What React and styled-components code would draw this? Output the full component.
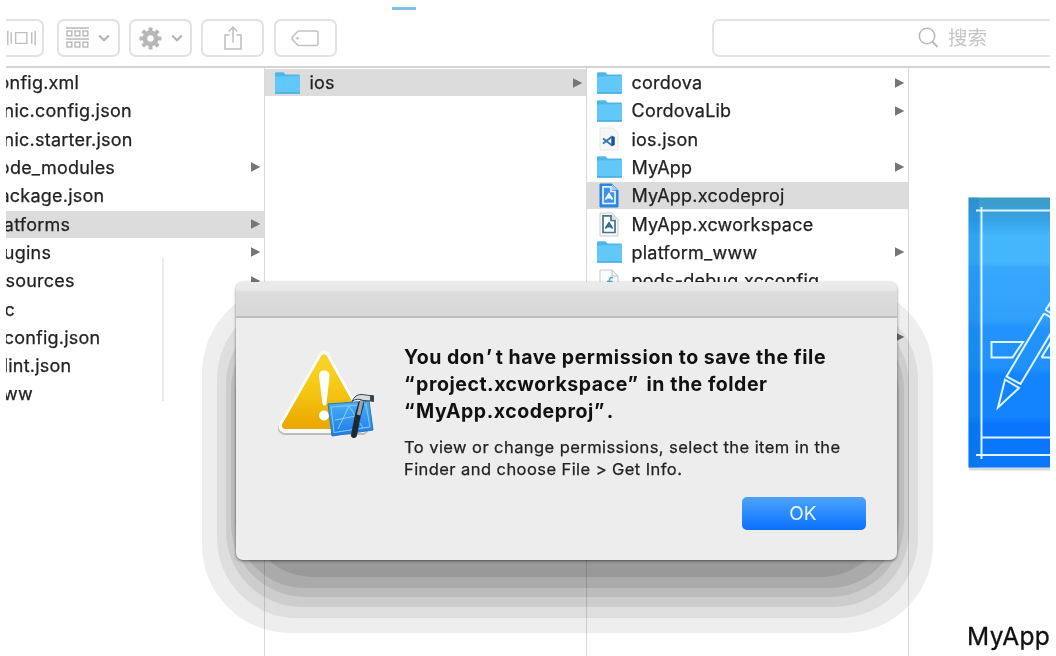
import React from 'react';
import styled, { createGlobalStyle } from 'styled-components';

const Global = createGlobalStyle`
  * { box-sizing: border-box; }
  body { margin: 0; background: #fff; font-family: Inter, "Noto Sans CJK SC", sans-serif; color: #222; }
`;

const Window = styled.div`
  position: relative;
  width: 1044px;
  height: 656px;
  margin-left: 6px;
  overflow: hidden;
  background: #fff;
`;

const Toolbar = styled.header`
  display: flex;
  align-items: flex-start;
  height: 68px;
  padding-top: 19px;
  border-bottom: 2px solid #d4d4d4;
`;

const ToolButton = styled.div`
  display: flex;
  align-items: center;
  justify-content: center;
  flex: none;
  width: ${(p) => p.$width || 63}px;
  height: 38px;
  margin-left: ${(p) => p.$gap ?? 9.3}px;
  border: 2px solid #e2e2e2;
  border-radius: 7px;
`;

const Gap = styled.span`
  width: 9px;
`;

const Search = styled.div`
  display: flex;
  align-items: center;
  flex: none;
  width: 400px;
  height: 38px;
  margin-left: 375.5px;
  padding-left: 204px;
  gap: 9px;
  border: 2px solid #e4e4e4;
  border-radius: 7px;
  color: #c6c6c6;
  font-size: 19.5px;
  line-height: 26px;
`;

const SearchLabel = styled.span`
  padding-bottom: 1px;
`;

const Columns = styled.div`
  display: flex;
  height: 588px;
`;

const Column = styled.div`
  flex: none;
  width: ${(p) => p.$width}px;
  padding-top: 1px;
  border-right: 1.5px solid #dadada;
  overflow: hidden;
`;

const Row = styled.div`
  display: flex;
  align-items: center;
  height: 27px;
  margin-bottom: 1.32px;
  padding-left: ${(p) => p.$indent}px;
  padding-right: 3px;
  background: ${(p) => (p.$selected ? '#dcdcdc' : 'transparent')};
`;

const IconSlot = styled.span`
  display: flex;
  justify-content: center;
  flex: none;
  width: 27px;
  margin-right: 9px;
`;

const Name = styled.span`
  flex: 1;
  margin-left: ${(p) => p.$shift || 0}px;
  white-space: nowrap;
  font-size: 18px;
  -webkit-text-stroke: 0.25px currentColor;
  line-height: 27px;
  letter-spacing: 0.23px;
`;

const Preview = styled.aside`
  display: flex;
  flex-direction: column;
  flex: none;
  padding: 129px 0 0 57px;
`;

const PreviewName = styled.div`
  margin: 145px 0 0 1px;
  font-size: 24.5px;
  -webkit-text-stroke: 0.3px currentColor;
  line-height: 32px;
  letter-spacing: 0.4px;
  color: #111;
`;

const TabMark = styled.div`
  position: absolute;
  left: 386px;
  top: 7px;
  width: 24px;
  height: 3px;
  background: #7fc0e6;
`;

const ScrollEdge = styled.div`
  position: absolute;
  left: 156px;
  top: 258px;
  width: 2px;
  height: 143px;
  background: #ececec;
`;

const Shadow = styled.div`
  position: absolute;
  inset: 0;
  mix-blend-mode: multiply;
  pointer-events: none;
`;

const ShadowBand = styled.div`
  position: absolute;
  left: ${(p) => p.$l}px;
  top: ${(p) => p.$t}px;
  width: ${(p) => p.$r - p.$l}px;
  height: ${(p) => p.$b - p.$t}px;
  border-radius: ${(p) => p.$radius}px;
  background: ${(p) => p.$color};
`;

const Dialog = styled.section`
  position: absolute;
  left: 230px;
  top: 282px;
  width: 661px;
  height: 277.5px;
  border-radius: 7px;
  overflow: hidden;
  background: #ededed;
  box-shadow: 0 1px 3px rgba(0, 0, 0, 0.5);
`;

const TitleBar = styled.div`
  height: 36px;
  background: linear-gradient(#ebebeb 0, #e8e8e8 8px, #dcdcdc 10px, #d8d8d8 100%);
  border-bottom: 2px solid #bdbdbd;
`;

const DialogBody = styled.div`
  display: flex;
  padding: 26px 31px 0 37px;
`;

const Message = styled.div`
  flex: 1;
  margin-left: 26px;
  white-space: nowrap;
`;

const Heading = styled.h1`
  margin: 0;
  font-size: 19.5px;
  line-height: 27px;
  font-weight: 700;
  letter-spacing: 0.54px;
  color: #111;
`;

const Mark = styled.span`
  margin: 0 ${(p) => p.$after || 0}px 0 ${(p) => p.$before || 0}px;
`;

const Detail = styled.p`
  margin: 11px 0 0;
  font-size: 16.5px;
  -webkit-text-stroke: 0.25px currentColor;
  line-height: 22px;
  letter-spacing: 0.43px;
  color: #222;
`;

const Actions = styled.div`
  display: flex;
  justify-content: flex-end;
  margin-top: 16.5px;
`;

const OkButton = styled.button`
  width: 124px;
  height: 33px;
  padding: 0 2px 0 0;
  border: 0;
  border-radius: 5px;
  background: linear-gradient(#4ea2fd, #2a8bff 50%, #0a70fc);
  color: #e8f4ff;
  font: 400 19px Inter, sans-serif;
`;

const Folder = () => (
  <svg width="27" height="24" viewBox="0 0 27 24">
    <path d="M1 2.5Q1 1.5 2 1.5H9.5L11.5 4H25Q26 4 26 5V22.5H1Z" fill="#62c8fa" />
    <path d="M1 5.500V2.500Q1 1.500 2 1.500H9.500L11.500 3.500H25.500V5Z" fill="#4fb4e6" />
    <path d="M1 22H26" stroke="#46a9dc" strokeWidth="1.4" />
  </svg>
);

const CodeFile = () => (
  <svg width="20" height="24" viewBox="0 0 20 24">
    <path d="M1 1H14L19 6V23H1Z" fill="#f6f6f6" stroke="#e8e8e8" />
    <path d="M4 11.500L12.500 18M4 16.500L12.500 10" stroke="#2d71b8" strokeWidth="1.7" fill="none" />
    <path d="M12.300 8.500L15.800 10V18L12.300 19.500Z" fill="#17549c" />
  </svg>
);

const ProjectFile = ({ filled }) => (
  <svg width="20" height="25" viewBox="0 0 20 25">
    <path d="M1 1H13L19 7V24H1Z" fill={filled ? '#2f86e4' : '#f7f8f9'} stroke={filled ? '#2f7ed6' : '#c9cdd0'} />
    <path d="M4 3.8H12V8.5H16V20.5H4Z" fill={filled ? '#3d92ea' : '#fff'} stroke={filled ? '#e7f4ff' : '#3f7397'} strokeWidth="1.7" />
    <path d="M13 1V7H19Z" fill={filled ? '#9fcdf9' : '#dce3e8'} />
    <path d="M6.500 16.500L10 11L13.500 16.500M7.500 14.500H12.500" stroke={filled ? '#fff' : '#2f6488'} strokeWidth="1.8" fill="none" />
  </svg>
);

const ConfigFile = () => (
  <svg width="20" height="24" viewBox="0 0 20 24">
    <path d="M1 1H13L19 7V23H1Z" fill="#fbfbfb" stroke="#c9c9c9" />
    <path d="M13 1V7H19" fill="none" stroke="#bdbdbd" />
    <path d="M14 9Q11 7.500 10.500 11L9.500 20M8 12.500H13.500" stroke="#4da9d8" strokeWidth="1.6" fill="none" />
  </svg>
);

const Arrow = () => (
  <svg width="11" height="12" viewBox="0 0 11 12">
    <path d="M1 1.300L10.300 6L1 10.700Z" fill="#757575" />
  </svg>
);

const Chevron = () => (
  <svg width="12" height="8" viewBox="0 0 12 8">
    <path d="M1.200 1.500L6 6.200L10.800 1.500" fill="none" stroke="#b3b3b3" strokeWidth="2.2" />
  </svg>
);

const FlowIcon = () => (
  <svg width="44" height="16" viewBox="1 0 44 16" fill="none" stroke="#c0c0c0" strokeWidth="1.5">
    <path d="M10 0.500V15.500M13.500 2V14M34.500 2V14M38 0.500V15.500" />
    <path d="M18 2.500H29.500V13.500H18Z" />
  </svg>
);

const GroupIcon = () => (
  <svg width="23" height="22" viewBox="0 0 23 22" fill="none" stroke="#b9b9b9" strokeWidth="1.4">
    <path d="M0 1H23M0 12H23" />
    {[1, 9, 17].map((x) => (
      <React.Fragment key={x}>
        <rect x={x} y="4" width="4.8" height="4.8" />
        <rect x={x} y="15.2" width="4.8" height="4.8" />
      </React.Fragment>
    ))}
  </svg>
);

const Gear = () => (
  <svg width="23" height="23" viewBox="-11.5 -11.5 23 23">
    {[0, 45, 90, 135].map((a) => (
      <rect key={a} x="-2" y="-11" width="4" height="22" rx="0.6" fill="#b7b7b7" transform={`rotate(${a})`} />
    ))}
    <circle r="5.6" fill="none" stroke="#b7b7b7" strokeWidth="4.6" />
    <circle r="3.2" fill="#fff" />
  </svg>
);

const Share = () => (
  <svg width="20" height="25" viewBox="0 0 20 25" fill="none" stroke="#bdbdbd" strokeWidth="1.5">
    <path d="M6.500 9H2V23H18V9H13.500M10 16.500V1.500M5.800 5.500L10 1.100L14.200 5.500" />
  </svg>
);

const Tag = () => (
  <svg width="28" height="17" viewBox="0 0 28 17">
    <path d="M8 1H25Q27 1 27 3V13.500Q27 15.500 25 15.500H8Q6.500 15.500 1.500 9.500Q0.600 8.200 1.500 7Q6.500 1 8 1Z" fill="none" stroke="#c2c2c2" strokeWidth="1.5" />
    <circle cx="6.500" cy="8.200" r="1.3" fill="#c2c2c2" />
  </svg>
);

const Magnifier = () => (
  <svg width="21" height="22" viewBox="0 0 21 22" fill="none" stroke="#bcbcbc" strokeWidth="1.6">
    <circle cx="9" cy="9" r="7.7" />
    <path d="M14.400 14.800L19.500 20" strokeWidth="2" />
  </svg>
);

const Blueprint = () => (
  <svg width="90" height="278" viewBox="2 0 90 278">
    <defs>
      <linearGradient id="sheet" x1="0" y1="0" x2="0" y2="1">
        <stop offset="0" stopColor="#3f9cc4" />
        <stop offset="0.08" stopColor="#37a2e6" />
        <stop offset="0.14" stopColor="#43b6fc" />
        <stop offset="0.24" stopColor="#43b6fc" />
        <stop offset="0.26" stopColor="#38a8fd" />
        <stop offset="0.45" stopColor="#30a0fc" />
        <stop offset="0.48" stopColor="#2394fd" />
        <stop offset="0.63" stopColor="#1f90fd" />
        <stop offset="0.66" stopColor="#1484fe" />
        <stop offset="0.81" stopColor="#1484fe" />
        <stop offset="0.84" stopColor="#0a74fd" />
        <stop offset="1" stopColor="#0a78fb" />
      </linearGradient>
    </defs>
    <rect x="5" y="3" width="90" height="270.500" fill="#d6dade" />
    <rect x="4.500" y="0.500" width="90" height="270" fill="url(#sheet)" />
    <rect x="4.500" y="0.500" width="10.500" height="270" fill="#0b78d8" opacity="0.3" />
    <g fill="none" stroke="#dff5ff" strokeWidth="2">
      <path d="M12 13.500H93M17.500 10V262M12 258H93M17.500 240.500H93" />
      <path d="M27.500 145H59L48.500 160.500H27.500Z" />
      <path d="M77.500 160.500H93M77.500 160.500L93 135" />
      <path d="M80 116.500L42.500 179.500L56.500 187L93 126" />
      <path d="M41 182.500L55 191L34 210.500Z" />
      <path d="M81.500 113L93 96M80 116.500L93 124M81.500 113L93 119.500" />
    </g>
  </svg>
);

const Warning = () => (
  <svg width="105" height="96" viewBox="0 0 105 96">
    <defs>
      <linearGradient id="amber" x1="0" y1="0" x2="0" y2="1">
        <stop offset="0" stopColor="#f8d52a" />
        <stop offset="0.45" stopColor="#f5c814" />
        <stop offset="1" stopColor="#eba900" />
      </linearGradient>
      <linearGradient id="plate" x1="0" y1="0" x2="0" y2="1">
        <stop offset="0" stopColor="#4ab0f6" />
        <stop offset="1" stopColor="#1c7be8" />
      </linearGradient>
    </defs>
    <path d="M51 14L89 84H12Z" fill="#bbb" stroke="#bcbcbc" strokeWidth="14" strokeLinejoin="round" />
    <path d="M51 13L89 82.500H12Z" fill="#fff" stroke="#fafafa" strokeWidth="13" strokeLinejoin="round" />
    <path d="M51 14L88.500 81.500H12.500Z" fill="url(#amber)" stroke="url(#amber)" strokeWidth="7" strokeLinejoin="round" />
    <path d="M46 32Q46 26.500 51 26.500Q56.500 26.500 56.500 32L53.500 60Q51.500 63 49.500 60Z" fill="#fff" />
    <circle cx="51" cy="71.500" r="5" fill="#fff" />
    <path d="M55 60L96 57L100 86L59 92Z" fill="url(#plate)" stroke="#2c77b5" />
    <path d="M58 63L93 60.500L97 83L61 88.500ZM65 85L76 62L90 84M62 76L88 71" fill="none" stroke="#8ccbf8" strokeWidth="1" />
    <path d="M88 60L85 71L81 91" fill="none" stroke="#202932" strokeWidth="6" strokeLinecap="round" />
    <path d="M90 52L85.500 71" stroke="#9aa5ae" strokeWidth="3.500" />
    <path d="M79 57.500Q82 50 89 50.500L100 52V57L90 56.500Q84 53.500 79 57.500Z" fill="#d8dcdf" stroke="#3d444a" />
    <path d="M97 51L101 51.500V58L97 57Z" fill="#3c444a" />
  </svg>
);

const icons = {
  folder: <Folder />,
  code: <CodeFile />,
  project: <ProjectFile filled />,
  workspace: <ProjectFile />,
  config: <ConfigFile />,
};

const root = [
  { name: 'config.xml' },
  { name: 'ionic.config.json' },
  { name: 'ionic.starter.json' },
  { name: 'node_modules', open: true },
  { name: 'package.json' },
  { name: 'platforms', open: true, selected: true },
  { name: 'plugins', open: true },
  { name: 'resources', open: true },
  { name: 'src', open: true },
  { name: 'tsconfig.json' },
  { name: 'tslint.json' },
  { name: 'www', open: true },
];

const platforms = [{ name: 'ios', icon: 'folder', open: true, selected: true }];

const ios = [
  { name: 'cordova', icon: 'folder', open: true },
  { name: 'CordovaLib', icon: 'folder', open: true },
  { name: 'ios.json', icon: 'code' },
  { name: 'MyApp', icon: 'folder', open: true },
  { name: 'MyApp.xcodeproj', icon: 'project', selected: true },
  { name: 'MyApp.xcworkspace', icon: 'workspace' },
  { name: 'platform_www', icon: 'folder', open: true },
  { name: 'pods-debug.xcconfig', icon: 'config' },
];

// Left, top, right, bottom, corner radius and grey of each shadow step.
const bands = [
  [196, 285, 927, 633, 88, '#eeeeee'],
  [211, 299, 912, 618, 80, '#dedede'],
  [220, 308, 903, 607, 76, '#cdcdcd'],
  [225, 316, 898, 597, 74, '#bcbcbc'],
  [229, 325, 893, 588, 70, '#aaaaaa'],
  [238, 340, 884, 577, 70, '#999999'],
];

const FileColumn = ({ files, width, indent, shift, children }) => (
  <Column $width={width}>
    {files.map((f) => (
      <Row key={f.name} $indent={indent} $selected={f.selected}>
        {f.icon && <IconSlot>{icons[f.icon]}</IconSlot>}
        <Name $shift={shift}>{f.name}</Name>
        {f.open && <Arrow />}
      </Row>
    ))}
    {children}
  </Column>
);

// The third column continues under the dialog; its tenth entry is a folder.
const HiddenRows = () => (
  <>
    <Row $indent={9} />
    <Row $indent={9}>
      <Name />
      <Arrow />
    </Row>
  </>
);

export default function App() {
  return (
    <>
      <Global />
      <Window>
        <Toolbar>
          <ToolButton $width={47} $gap={-9.3}><FlowIcon /></ToolButton>
          <ToolButton $gap={13}>
            <GroupIcon />
            <Gap />
            <Chevron />
          </ToolButton>
          <ToolButton>
            <Gear />
            <Gap />
            <Chevron />
          </ToolButton>
          <ToolButton><Share /></ToolButton>
          <ToolButton><Tag /></ToolButton>
          <Search>
            <Magnifier />
            <SearchLabel>搜索</SearchLabel>
          </Search>
        </Toolbar>
        <Columns>
          <FileColumn files={root} width={259} indent={0} shift={-18} />
          <FileColumn files={platforms} width={322} indent={8.5} />
          <FileColumn files={ios} width={322} indent={8.5}>
            <HiddenRows />
          </FileColumn>
          <Preview>
            <Blueprint />
            <PreviewName>MyApp</PreviewName>
          </Preview>
        </Columns>
        <TabMark />
        <ScrollEdge />
        <Shadow>
          {bands.map(([l, t, r, b, radius, color]) => (
            <ShadowBand key={color} $l={l} $t={t} $r={r} $b={b} $radius={radius} $color={color} />
          ))}
        </Shadow>
        <Dialog>
          <TitleBar />
          <DialogBody>
            <Warning />
            <Message>
              <Heading>
                You don<Mark $before={1} $after={3}>’</Mark>t have permission to save the file<br />
                <Mark $after={1}>“</Mark>project.xcworkspace<Mark $after={3}>”</Mark> in the folder<br />
                <Mark $after={1}>“</Mark>MyApp.xcodeproj<Mark $after={2}>”</Mark>.
              </Heading>
              <Detail>
                To view or change permissions, select the item in the<br />
                Finder and choose File &gt; Get Info.
              </Detail>
              <Actions><OkButton>OK</OkButton></Actions>
            </Message>
          </DialogBody>
        </Dialog>
      </Window>
    </>
  );
}
